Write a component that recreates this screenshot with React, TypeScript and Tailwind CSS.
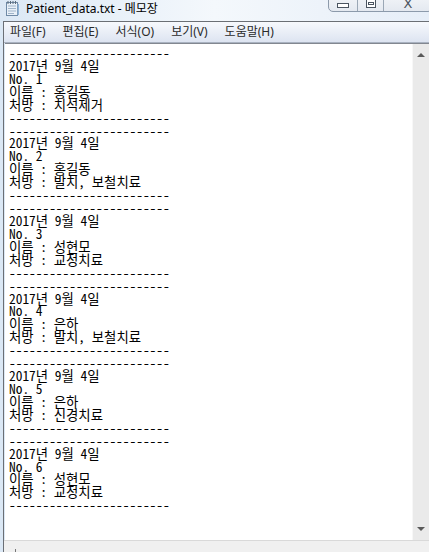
import React from "react";

const records = [
  { no: 1, name: "홍길동", rx: "치석제거" },
  { no: 2, name: "홍길동", rx: "발치, 보철치료" },
  { no: 3, name: "성현모", rx: "교정치료" },
  { no: 4, name: "은하", rx: "발치, 보철치료" },
  { no: 5, name: "은하", rx: "신경치료" },
  { no: 6, name: "성현모", rx: "교정치료" },
];

const dash = "------------------------";

const lines: string[] = records.flatMap((r) => [
  dash,
  "2017년 9월 4일",
  `No. ${r.no}`,
  `이름 : ${r.name}`,
  `처방 : ${r.rx}`,
  dash,
]);

function NotepadIcon() {
  return (
    <svg width="15" height="17" viewBox="0 0 15 17">
      <rect x="1.5" y="2.5" width="11" height="13" fill="#e8f0f8" stroke="#6f8aa6" />
      <path d="M3 6h8M3 8.5h8M3 11h8M3 13.5h6" stroke="#9fb4c9" strokeWidth="1" />
      <path d="M3 1v3M5.5 1v3M8 1v3M10.5 1v3" stroke="#5b6b7b" strokeWidth="1" />
      <rect x="12.5" y="4" width="1.5" height="11" fill="#8fb3d6" />
    </svg>
  );
}

export default function App() {
  return (
    <div className="w-[429px] h-[552px] overflow-hidden flex flex-col bg-gradient-to-r from-[#dbe8f5] via-[#f4f8fc] to-[#e6eef8] font-['Noto_Sans','Noto_Sans_CJK_KR',sans-serif]">
      {/* Title bar */}
      <div className="h-[21px] flex items-start relative shrink-0">
        <div className="pl-[5px]">
          <NotepadIcon />
        </div>
        <div className="ml-[6px] mt-[1px] text-[12px] leading-[16px] text-black">
          Patient_data.txt - 메모장
        </div>
        {/* caption buttons */}
        <div className="absolute right-[-4px] top-[-10px] h-[22px] w-[105px] flex border border-[#8c9aab] rounded-b-[5px] bg-gradient-to-b from-[#f6f8fb] to-[#e4e9f0]">
          <div className="w-[29px] flex items-end justify-center pb-[3px] border-r border-[#9aa7b5]">
            <div className="w-[12px] h-[5px] border border-[#4a5460] bg-white" />
          </div>
          <div className="w-[26px] flex items-end justify-center pb-[3px] border-r border-[#9aa7b5]">
            <div className="w-[10px] h-[9px] border border-[#4a5460] bg-white flex items-center justify-center">
              <div className="w-[6px] h-[3px] border border-[#4a5460]" />
            </div>
          </div>
          <div className="flex-1 flex items-end justify-center pb-[1px] text-[13px] leading-[13px] text-[#4a5460] font-['DejaVu_Sans',sans-serif]">
            X
          </div>
        </div>
      </div>

      <div className="flex-1 flex flex-col ml-[3px] border-l border-t border-[#6b6f75]">
        {/* Menu bar */}
        <div className="h-[21px] shrink-0 flex items-center gap-[17px] pl-[6px] text-[12px] text-[#2a2a2a] bg-gradient-to-b from-[#f7f9fd] to-[#dde4f1] border-b border-[#a9b2c0]">
          <span>파일(F)</span>
          <span>편집(E)</span>
          <span>서식(O)</span>
          <span>보기(V)</span>
          <span>도움말(H)</span>
        </div>

        {/* Edit area */}
        <div className="flex-1 flex bg-white border-t border-[#828790] ml-[1px]">
          <div className="flex-1 pl-[4px] pt-[2px] text-[13.4px] leading-[12.92px] text-black whitespace-pre font-['Noto_Sans_Mono_CJK_KR','Liberation_Mono','Noto_Sans_CJK_KR',monospace]">
            {lines.map((l, i) => (
              <div key={i}>{l}</div>
            ))}
          </div>
          {/* vertical scrollbar */}
          <div className="w-[17px] flex flex-col justify-between items-center bg-[#eaeaea] border-l border-[#f7f7f7] pt-[9px] pb-[9px]">
            <div className="w-0 h-0 border-l-[4px] border-r-[4px] border-b-[4px] border-l-transparent border-r-transparent border-b-[#5a5a5a]" />
            <div className="w-0 h-0 border-l-[4px] border-r-[4px] border-t-[4px] border-l-transparent border-r-transparent border-t-[#5a5a5a]" />
          </div>
        </div>

        {/* bottom strip */}
        <div className="h-[12px] shrink-0 bg-[#f0f0f0] border-t border-[#d9d9d9] flex items-end pl-[11px]">
          <div className="w-[1px] h-[3px] bg-[#777]" />
        </div>
      </div>
    </div>
  );
}
